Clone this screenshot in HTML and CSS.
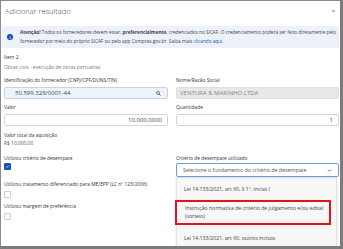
FILE: index.html
```html
<!DOCTYPE html>
<html lang="pt-BR">
<head>
	<meta charset="UTF-8">
	<meta name="viewport" content="width=device-width, initial-scale=1.0">
	<title>Adicionar resultado</title>
	<link rel="stylesheet" href="styles.css">
</head>
<body>
	<div class="screen">
		<div class="modal">
			<div class="modal-header">
				<h1 class="title">Adicionar resultado</h1>
				<span class="close">&times;</span>
			</div>

			<div class="alert">
				<span class="alert-icon">i</span>
				<p class="alert-text">
					<b>Atenção!</b> Todos os fornecedores devem estar, <b>preferencialmente</b>, credenciados no SICAF. O credenciamento poderá ser feito diretamente pelo<br>
					fornecedor por meio do próprio SICAF ou pelo app Compras.gov.br. Saiba mais <a href="#" class="link">clicando aqui</a>.
				</p>
			</div>

			<div class="form">
				<div class="intro">
					<p class="item">Item 2</p>
					<p class="desc">Obras civis - execução de obras portuárias</p>
				</div>
				<div></div>

				<div class="field">
					<label class="label">Identificação do fornecedor (CNPJ/CPF/DUNS/TIN)</label>
					<div class="input input-search">
						<span>50.599.328/0001-44</span>
						<svg class="search-icon" viewBox="0 0 10 10" width="5" height="5">
							<circle cx="4" cy="4" r="3" fill="none" stroke="#333" stroke-width="1.3"/>
							<line x1="6.2" y1="6.2" x2="9" y2="9" stroke="#333" stroke-width="1.5"/>
						</svg>
					</div>
				</div>
				<div class="field">
					<label class="label">Nome/Razão Social</label>
					<div class="input input-disabled">VENTURA &amp; MARINHO LTDA</div>
				</div>

				<div class="field">
					<label class="label">Valor</label>
					<div class="input input-right">10.000,0000</div>
				</div>
				<div class="field">
					<label class="label">Quantidade</label>
					<div class="input input-right">1</div>
				</div>

				<div class="field field-total">
					<span class="label">Valor total da aquisição</span>
					<p class="total">R$ 10.000,00</p>
				</div>
				<div></div>

				<div class="checks">
					<span class="label">Utilizou critério de desempate</span>
					<span class="checkbox checked">
						<svg viewBox="0 0 10 10" width="7" height="7">
							<path d="M2.3 5.2 L4.2 7 L7.8 3" fill="none" stroke="#fff" stroke-width="1.3"/>
						</svg>
					</span>
					<span class="label label-gap">Utilizou tratamento diferenciado para ME/EPP (LC nº 123/2006)</span>
					<span class="checkbox"></span>
					<span class="label label-gap2">Utilizou margem de preferência</span>
					<span class="checkbox"></span>
				</div>
				<div class="select-field">
					<span class="label">Critério de desempate utilizado</span>
					<div class="select">
						<span>Selecione o fundamento do critério de desempate</span>
						<svg viewBox="0 0 10 10" width="5" height="5">
							<path d="M2 3.5 L5 6.5 L8 3.5" fill="none" stroke="#1351b4" stroke-width="1.6"/>
						</svg>
					</div>
					<ul class="dropdown">
						<li class="option">Lei 14.133/2021, art 60, § 1º, inciso I</li>
						<li class="option option-marked">Instrução normativa de critério de julgamento e/ou edital<br>(sorteio)</li>
						<li class="option option-last">Lei 14.133/2021, art 60, outros incisos</li>
					</ul>
				</div>
			</div>
		</div>
	</div>
</body>
</html>
```

FILE: styles.css
```css
body {
	margin: 0;
	font-family: "Open Sans", "Liberation Sans", sans-serif;
	color: #333;
}

.screen {
	width: 343px;
	height: 249px;
	box-sizing: border-box;
	border-left: 1px solid #8c8c8c;
	border-top: 1px solid #8c8c8c;
	border-right: 3px solid #7b7b7b;
	border-bottom: 3px solid #7b7b7b;
	background: #fff;
	overflow: hidden;
}

.modal {
	padding: 0 1px 0 3px;
}

.modal-header {
	display: flex;
	justify-content: space-between;
	align-items: center;
	height: 25px;
}

.title {
	margin: 0 0 6px 1px;
	font-size: 7.5px;
	font-weight: 300;
	line-height: 10px;
	color: #444;
	white-space: nowrap;
}

.close {
	margin: 0 4px 6px 0;
	font-size: 6px;
	line-height: 10px;
	color: #1351b4;
}

.alert {
	display: flex;
	align-items: center;
	gap: 7px;
	height: 22px;
	margin-left: -2px;
	padding: 0 2px 0 5px;
	background: #edf2fa;
	overflow: hidden;
}

.alert-icon {
	display: flex;
	justify-content: center;
	align-items: center;
	width: 6px;
	height: 6px;
	border-radius: 50%;
	background: #1351b4;
	color: #fff;
	font-size: 4px;
	font-weight: 700;
	flex-shrink: 0;
}

.alert-text {
	margin: 0;
	font-size: 4.7px;
	line-height: 9px;
	color: #444;
	white-space: nowrap;
}

.link {
	color: #1351b4;
	text-decoration: none;
}

.form {
	display: grid;
	grid-template-columns: 164px 163px;
	column-gap: 8px;
	margin-top: 6px;
	font-size: 4.9px;
}

.intro {
	padding-bottom: 6px;
}

.item {
	margin: 0 0 3px;
	line-height: 7px;
	color: #333;
}

.desc {
	margin: 0;
	line-height: 7px;
	color: #777;
}

.field {
	display: flex;
	flex-direction: column;
	margin-bottom: 5px;
}

.label {
	display: block;
	line-height: 7px;
	margin-bottom: 3px;
	color: #333;
	white-space: nowrap;
}

.input {
	display: flex;
	align-items: center;
	height: 12px;
	box-sizing: border-box;
	padding: 0 6px;
	border: 1px solid #d6d6d6;
	border-radius: 2px;
	background: #fff;
	font-size: 6px;
	color: #444;
}

.input-search {
	justify-content: space-between;
	background: #eef4fc;
	border-color: #c9d3e0;
	padding: 0 6px 0 10px;
}

.search-icon {
	display: block;
}

.input-disabled {
	background: #e8e8e8;
	border-color: #dedede;
	color: #888;
	padding-left: 3px;
}

.input-right {
	justify-content: flex-end;
	padding-right: 5px;
}

.field-total {
	margin-top: 1px;
	margin-bottom: 8px;
}

.field-total .label {
	margin-bottom: 1px;
}

.total {
	margin: 0;
	line-height: 7px;
	color: #555;
}

.checks {
	display: flex;
	flex-direction: column;
	align-items: flex-start;
}

.checks .label {
	margin-bottom: 1px;
}

.checks .label-gap {
	margin-top: 11px;
	margin-bottom: 3px;
}

.checks .label-gap2 {
	margin-top: 5px;
	margin-bottom: 3px;
}

.checkbox {
	display: flex;
	justify-content: center;
	align-items: center;
	width: 7px;
	height: 7px;
	box-sizing: border-box;
	border: 1px solid #cfcfcf;
	border-radius: 1px;
	background: #fff;
}

.checkbox.checked {
	border-color: #1351b4;
	background: #1351b4;
}

.select-field {
	position: relative;
}

.select-field .label {
	margin-bottom: 1px;
}

.select {
	display: flex;
	justify-content: space-between;
	align-items: center;
	height: 14px;
	box-sizing: border-box;
	padding: 0 6px;
	border: 1px solid #6d9be6;
	border-radius: 2px;
	background: #fff;
	font-size: 5.3px;
	color: #555;
}

.dropdown {
	position: absolute;
	top: 22px;
	left: 0;
	right: 2px;
	height: 68px;
	margin: 0;
	padding: 1px 0 0;
	list-style: none;
	background: #f7f7f7;
	border: 1px solid #e2e2e2;
	box-shadow: 0 1px 2px rgba(0, 0, 0, 0.12);
	font-size: 5.2px;
}

.option {
	padding: 6px 6px 6px 7px;
	line-height: 8.5px;
	color: #444;
	white-space: nowrap;
}

.option-marked {
	margin-left: -2px;
	margin-right: 5px;
	padding: 2px 4px 2px 8px;
	border: 2px solid #e3131b;
}

.option-last {
	padding-top: 9px;
}
```
